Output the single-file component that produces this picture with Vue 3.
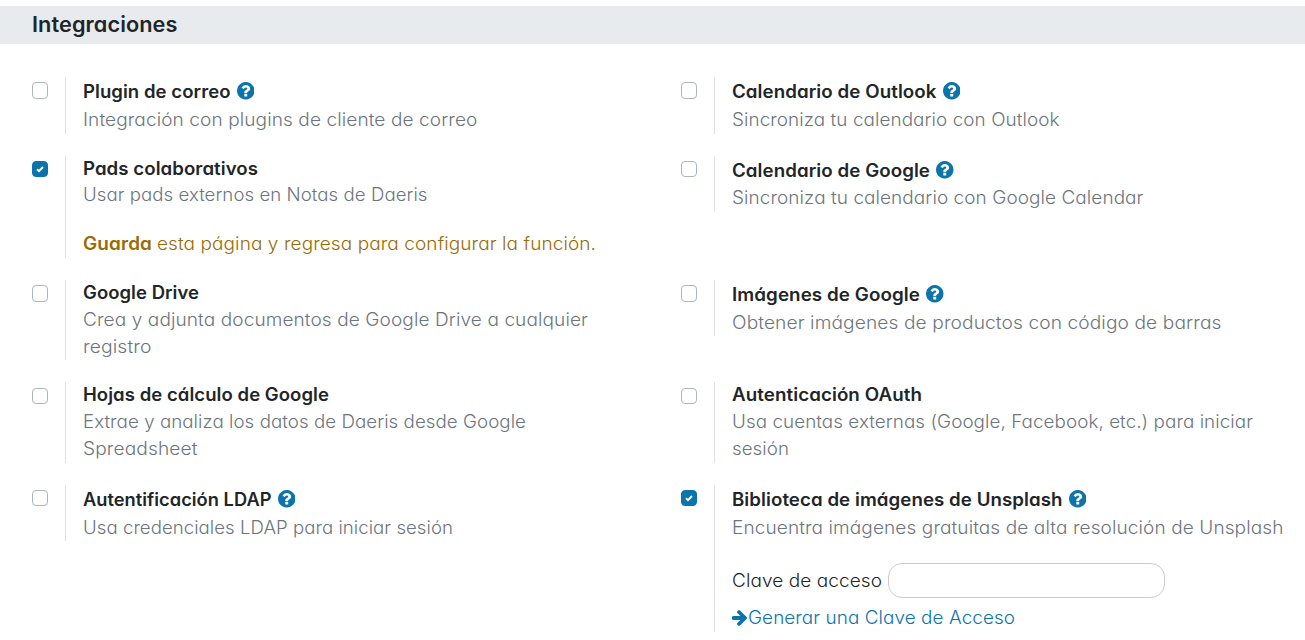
<script setup>
import { ref } from 'vue'

// Widens a line to the given width in pixels: mostly by stretching the
// letters, and for the rest by opening the space between them.
const vFit = {
  mounted(el, { value }) {
    if (!value) return
    const natural = el.getBoundingClientRect().width
    const scale = 1 + (value / natural - 1) * 0.85
    el.style.display = 'inline-block'
    el.style.letterSpacing = (value / scale - natural) / el.textContent.length + 'px'
    el.style.transform = `scaleX(${scale})`
    el.style.width = value + 'px'
  },
}

const settings = ref([
  { title: 'Plugin de correo', w: 147.5, help: true, lines: [['Integración con plugins de cliente de correo', 394.5]] },
  { title: 'Calendario de Outlook', w: 204.5, help: true, lines: [['Sincroniza tu calendario con Outlook', 327.5]] },
  { title: 'Pads colaborativos', w: 175, checked: true, tight: true, lines: [['Usar pads externos en Notas de Daeris', 344.5]], warning: true },
  { title: 'Calendario de Google', w: 198, help: true, tight: true, lines: [['Sincroniza tu calendario con Google Calendar', 411.5]] },
  { title: 'Google Drive', w: 116, lines: [['Crea y adjunta documentos de Google Drive a cualquier', 505], ['registro', 68.5]] },
  { title: 'Imágenes de Google', w: 188, help: true, lines: [['Obtener imágenes de productos con código de barras', 489.5]] },
  { title: 'Hojas de cálculo de Google', w: 246, lines: [['Extrae y analiza los datos de Daeris desde Google', 443], ['Spreadsheet', 114.5]] },
  { title: 'Autenticación OAuth', w: 190, lines: [['Usa cuentas externas (Google, Facebook, etc.) para iniciar', 521], ['sesión', 57]] },
  { title: 'Autentificación LDAP', w: 188.5, help: true, lines: [['Usa credenciales LDAP para iniciar sesión', 370]] },
  { title: 'Biblioteca de imágenes de Unsplash', w: 330.5, help: true, checked: true, lines: [['Encuentra imágenes gratuitas de alta resolución de Unsplash', 551.5]], access: true },
])
const accessKey = ref('')
</script>

<template>
  <main class="page">
    <h2 class="heading"><span v-fit="145.5">Integraciones</span></h2>
    <div class="grid">
      <section v-for="s in settings" :key="s.title" class="setting">
        <button class="box" :class="{ on: s.checked }" role="checkbox" :aria-checked="!!s.checked" @click="s.checked = !s.checked">
          <svg v-if="s.checked" viewBox="0 0 16 16"><path d="M5 8.2 7 10.1 11 6" /></svg>
        </button>
        <div class="pane" :class="{ helped: s.help, tight: s.tight }">
          <div class="title">
            <span v-fit="s.w">{{ s.title }}</span>
            <svg v-if="s.help" class="help" viewBox="0 0 1536 1536"><path d="M896 1248v-192q0-14-9-23t-23-9h-192q-14 0-23 9t-9 23v192q0 14 9 23t23 9h192q14 0 23-9t9-23zm256-672q0-88-55.5-163t-138.5-116-170-41q-243 0-371 213-15 24 8 42l132 100q7 6 19 6 16 0 25-12 53-68 86-92 34-24 86-24 48 0 85.5 26t37.5 59q0 38-20 61t-68 45q-63 28-115.5 86.5t-52.5 125.5v36q0 14 9 23t23 9h192q14 0 23-9t9-23q0-19 21.5-49.5t54.5-49.5q32-18 49-28.5t46-35 44.5-48 28-60.5 12.5-81zm384 192q0 209-103 385.5t-279.5 279.5-385.5 103-385.5-103-279.5-279.5-103-385.5 103-385.5 279.5-279.5 385.5-103 385.5 103 279.5 279.5 103 385.5z" /></svg>
          </div>
          <div v-for="[text, w] in s.lines" :key="text" class="desc"><span v-fit="w">{{ text }}</span></div>
          <div v-if="s.warning" class="warning"><b v-fit="69">Guarda</b><span v-fit="439">esta página y regresa para configurar la función.</span></div>
          <template v-if="s.access">
            <label class="access"><span v-fit="150">Clave de acceso</span><input v-model="accessKey" type="text" /></label>
            <a class="link"><svg viewBox="128 181 1472 1558"><path d="M1600 960q0 54-37 91l-651 651q-39 37-91 37-51 0-90-37l-75-75q-38-38-38-91t38-91l293-293h-704q-52 0-84.5-37.5t-32.5-90.5v-128q0-53 32.5-90.5t84.5-37.5h704l-293-294q-38-36-38-90t38-90l75-75q38-38 90-38 53 0 91 38l651 651q37 35 37 90z" /></svg><span v-fit="267">Generar una Clave de Acceso</span></a>
          </template>
        </div>
      </section>
    </div>
  </main>
</template>

<style>
body { background: #fff; }
</style>

<style scoped>
.page {
  box-sizing: border-box;
  height: 640px;
  padding-top: 6px;
  overflow: hidden;
  font: 300 18px/27px Inter, "Open Sans", sans-serif;
  font-feature-settings: "cv11";
  color: #212529;
  white-space: nowrap;
}
.page span, .page b { transform-origin: 0 50%; }
.heading {
  height: 38px;
  margin: 0;
  padding-left: 31.5px;
  background: #e8ebee;
  font-size: 21px;
  font-weight: 600;
  line-height: 38px;
}
.grid {
  display: grid;
  grid-template-columns: 649px 1fr;
  grid-template-rows: 79px 124px 102px 103px auto;
  padding: 33px 0 0 32px;
}
.setting { display: flex; align-items: flex-start; }
.box {
  box-sizing: border-box;
  flex: none;
  width: 16px;
  height: 16px;
  margin: 5px 17px 0 0;
  padding: 0;
  border: 1px solid #adb5bd;
  border-radius: 4px;
  background: #fff;
}
.setting:nth-child(-n+2) .box, .setting:nth-child(5) .box, .setting:nth-child(6) .box { height: 17px; }
.setting:nth-child(7) .box, .setting:nth-child(8) .box { margin-top: 6px; }
.box.on { border-color: #0b74ab; background: #0b74ab; }
.box svg { display: block; width: 16px; height: 16px; margin: -1px; fill: none; stroke: #fff; stroke-width: 2; }
.pane { border-left: 1px solid #dee2e6; padding-left: 16.5px; }
.title { display: flex; align-items: center; height: 27px; margin-top: -1px; font-weight: 600; }
.setting:nth-child(-n+2) .pane, .setting:nth-child(7) .pane, .setting:nth-child(8) .pane { padding-bottom: 1px; }
.helped .title { height: 28px; margin-top: 0; padding-top: 1px; line-height: 27px; box-sizing: border-box; }
.helped .desc { padding-top: 1px; }
.tight .title { height: 26px; }
.helped.tight .title { height: 28px; }
.helped.tight .desc { padding: 0 0 1px; }
.help { width: 17.5px; height: 17.5px; margin: -1.5px 0 0 6.5px; fill: #0b74ab; }
.desc { height: 27px; color: #6c757d; }
.warning { display: flex; gap: 5px; margin-top: 22px; height: 28px; color: #9a6b01; font-weight: 350; }
.warning b { font-weight: 600; }
.access { display: flex; gap: 6.5px; align-items: center; margin-top: 22px; height: 35px; }
.access span { margin-top: -1px; }
.access input {
  box-sizing: border-box;
  width: 277px;
  height: 35px;
  padding: 0 12px;
  border: 1px solid #c9ccd0;
  border-radius: 14px;
  outline: none;
  font: inherit;
}
.link { display: flex; align-items: center; gap: 1px; height: 28px; margin-top: 6px; color: #0b74ab; }
.link svg { width: 15px; height: 16px; fill: #0b74ab; }
.link span { margin-top: -1px; }
</style>
